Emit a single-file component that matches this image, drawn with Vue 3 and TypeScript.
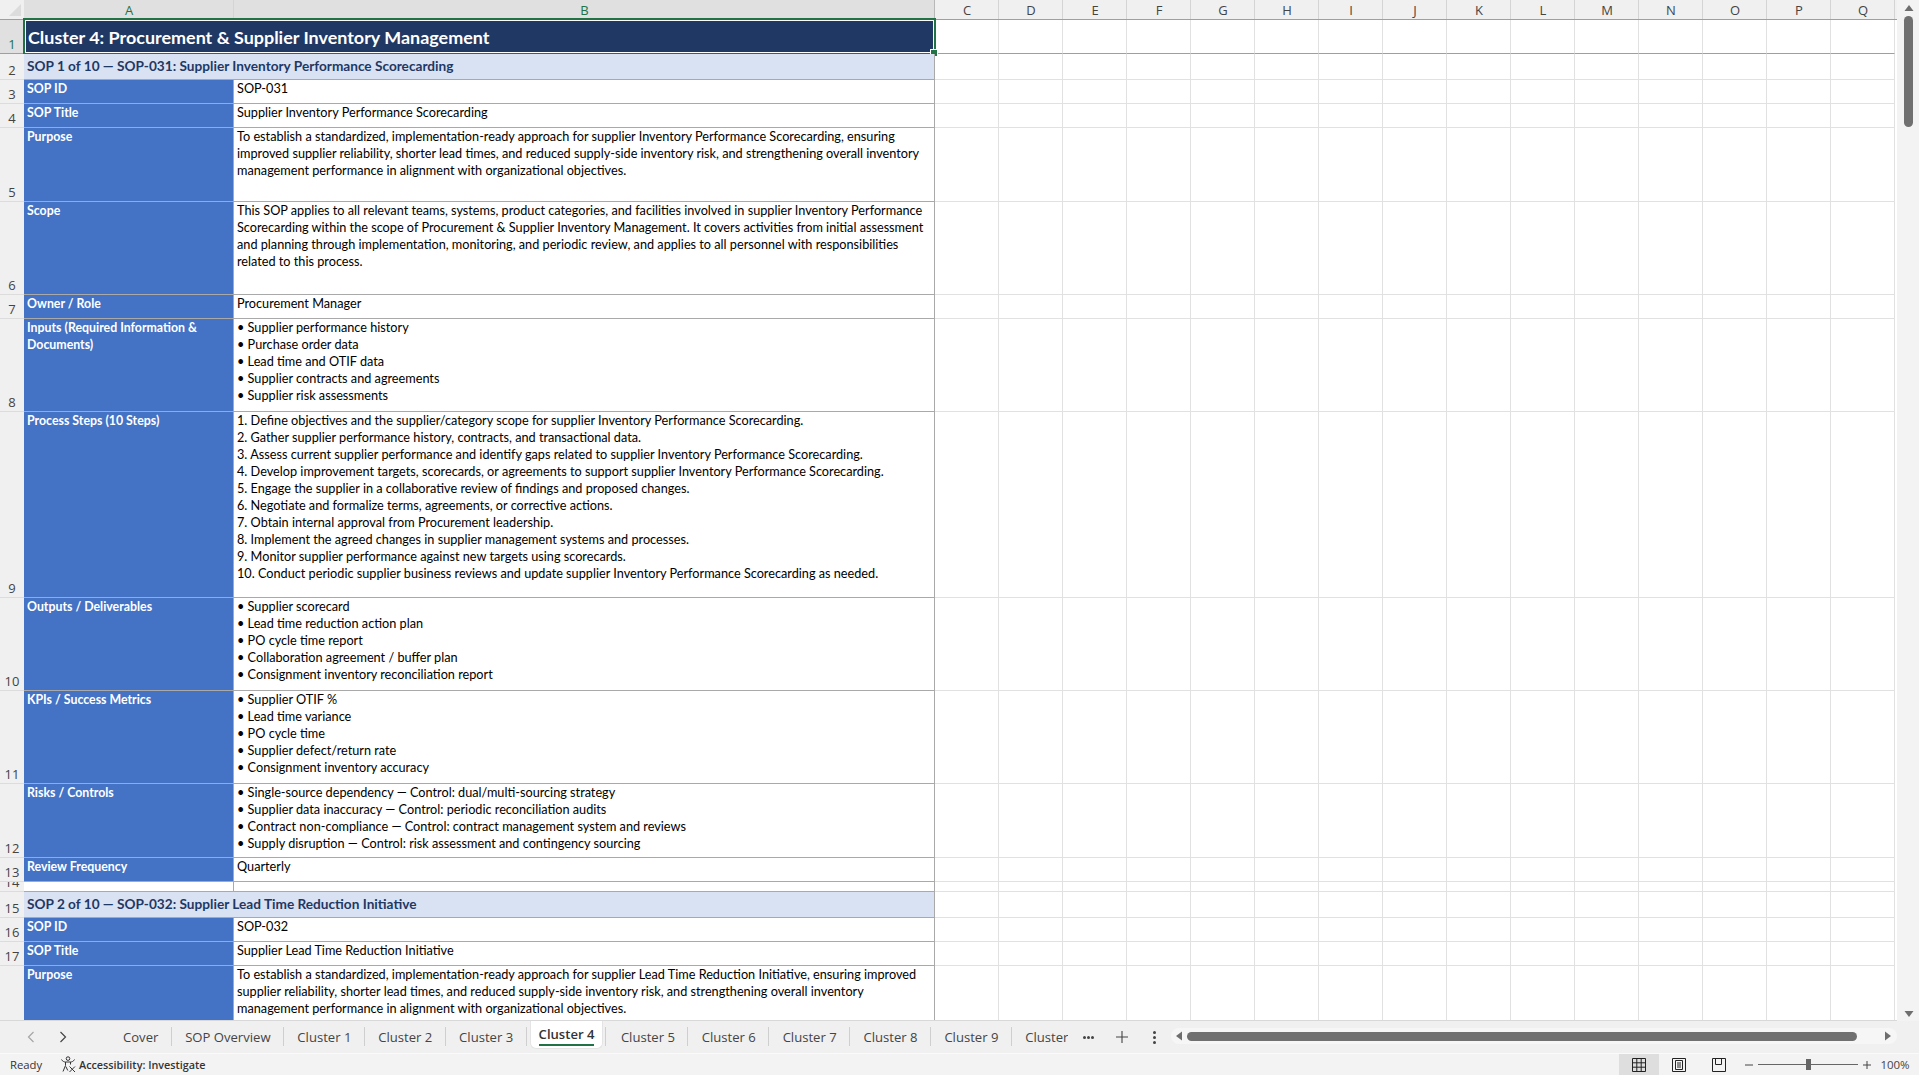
<script setup lang="ts">
type Row = {
  n: number;
  h: number;
  kind?: "title" | "section" | "blank";
  a?: string;
  b?: string;
};

const extraCols = ["C", "D", "E", "F", "G", "H", "I", "J", "K", "L", "M", "N", "O", "P", "Q"];

const rows: Row[] = [
  { n: 1, h: 34, kind: "title", a: "Cluster 4: Procurement & Supplier Inventory Management" },
  { n: 2, h: 26, kind: "section", a: "SOP 1 of 10 — SOP-031: Supplier Inventory Performance Scorecarding" },
  { n: 3, h: 24, a: "SOP ID", b: "SOP-031" },
  { n: 4, h: 24, a: "SOP Title", b: "Supplier Inventory Performance Scorecarding" },
  {
    n: 5,
    h: 74,
    a: "Purpose",
    b: "To establish a standardized, implementation-ready approach for supplier Inventory Performance Scorecarding, ensuring\nimproved supplier reliability, shorter lead times, and reduced supply-side inventory risk, and strengthening overall inventory\nmanagement performance in alignment with organizational objectives.",
  },
  {
    n: 6,
    h: 93,
    a: "Scope",
    b: "This SOP applies to all relevant teams, systems, product categories, and facilities involved in supplier Inventory Performance\nScorecarding within the scope of Procurement & Supplier Inventory Management. It covers activities from initial assessment\nand planning through implementation, monitoring, and periodic review, and applies to all personnel with responsibilities\nrelated to this process.",
  },
  { n: 7, h: 24, a: "Owner / Role", b: "Procurement Manager" },
  {
    n: 8,
    h: 93,
    a: "Inputs (Required Information &\nDocuments)",
    b: "• Supplier performance history\n• Purchase order data\n• Lead time and OTIF data\n• Supplier contracts and agreements\n• Supplier risk assessments",
  },
  {
    n: 9,
    h: 186,
    a: "Process Steps (10 Steps)",
    b: "1. Define objectives and the supplier/category scope for supplier Inventory Performance Scorecarding.\n2. Gather supplier performance history, contracts, and transactional data.\n3. Assess current supplier performance and identify gaps related to supplier Inventory Performance Scorecarding.\n4. Develop improvement targets, scorecards, or agreements to support supplier Inventory Performance Scorecarding.\n5. Engage the supplier in a collaborative review of findings and proposed changes.\n6. Negotiate and formalize terms, agreements, or corrective actions.\n7. Obtain internal approval from Procurement leadership.\n8. Implement the agreed changes in supplier management systems and processes.\n9. Monitor supplier performance against new targets using scorecards.\n10. Conduct periodic supplier business reviews and update supplier Inventory Performance Scorecarding as needed.",
  },
  {
    n: 10,
    h: 93,
    a: "Outputs / Deliverables",
    b: "• Supplier scorecard\n• Lead time reduction action plan\n• PO cycle time report\n• Collaboration agreement / buffer plan\n• Consignment inventory reconciliation report",
  },
  {
    n: 11,
    h: 93,
    a: "KPIs / Success Metrics",
    b: "• Supplier OTIF %\n• Lead time variance\n• PO cycle time\n• Supplier defect/return rate\n• Consignment inventory accuracy",
  },
  {
    n: 12,
    h: 74,
    a: "Risks / Controls",
    b: "• Single-source dependency — Control: dual/multi-sourcing strategy\n• Supplier data inaccuracy — Control: periodic reconciliation audits\n• Contract non-compliance — Control: contract management system and reviews\n• Supply disruption — Control: risk assessment and contingency sourcing",
  },
  { n: 13, h: 24, a: "Review Frequency", b: "Quarterly" },
  { n: 14, h: 10, kind: "blank" },
  { n: 15, h: 26, kind: "section", a: "SOP 2 of 10 — SOP-032: Supplier Lead Time Reduction Initiative" },
  { n: 16, h: 24, a: "SOP ID", b: "SOP-032" },
  { n: 17, h: 24, a: "SOP Title", b: "Supplier Lead Time Reduction Initiative" },
  {
    n: 18,
    h: 74,
    a: "Purpose",
    b: "To establish a standardized, implementation-ready approach for supplier Lead Time Reduction Initiative, ensuring improved\nsupplier reliability, shorter lead times, and reduced supply-side inventory risk, and strengthening overall inventory\nmanagement performance in alignment with organizational objectives.",
  },
];

const tabs = ["Cover", "SOP Overview", "Cluster 1", "Cluster 2", "Cluster 3", "Cluster 4", "Cluster 5", "Cluster 6", "Cluster 7", "Cluster 8", "Cluster 9", "Cluster 10"];
</script>

<template>
  <div class="app">
    <div class="main">
      <div class="sheet">
        <div class="col-head">
          <div class="corner"><span class="corner-tri"></span></div>
          <div class="ch ch-a on">A</div>
          <div class="ch ch-b on">B</div>
          <div v-for="c in extraCols" :key="c" class="ch ch-x">{{ c }}</div>
        </div>

        <div
          v-for="r in rows"
          :key="r.n"
          class="row"
          :class="{ frozen: r.n === 1 }"
          :style="{ height: r.h + 'px' }"
        >
          <div class="rh" :class="{ on: r.n === 1 }">{{ r.n }}</div>
          <template v-if="r.kind === 'title'">
            <div class="merged title">{{ r.a }}</div>
          </template>
          <template v-else-if="r.kind === 'section'">
            <div class="merged section">{{ r.a }}</div>
          </template>
          <template v-else>
            <div class="cell label" :class="{ empty: r.kind === 'blank' }">{{ r.a }}</div>
            <div class="cell value">{{ r.b }}</div>
          </template>
          <div v-for="c in extraCols" :key="c" class="blank"></div>
          <div v-if="r.n === 1" class="selection"><span class="handle"></span></div>
        </div>
      </div>

      <div class="vbar">
        <svg class="varrow" width="10" height="8" viewBox="0 0 10 8"><path d="M5 1 9.5 7H.5z" fill="#6e6e6e" /></svg>
        <div class="vthumb"></div>
        <div class="vspace"></div>
        <svg class="varrow" width="10" height="8" viewBox="0 0 10 8"><path d="M5 7 .5 1h9z" fill="#6e6e6e" /></svg>
      </div>
    </div>

    <div class="tabbar">
      <div class="nav">
        <svg width="8" height="12" viewBox="0 0 8 12"><path d="M6.5 1 1.5 6l5 5" fill="none" stroke="#a6a6a6" stroke-width="1.2" /></svg>
        <svg width="8" height="12" viewBox="0 0 8 12"><path d="M1.5 1l5 5-5 5" fill="none" stroke="#444" stroke-width="1.2" /></svg>
      </div>
      <div class="tabs">
        <div
          v-for="t in tabs"
          :key="t"
          class="tab"
          :class="{ active: t === 'Cluster 4' }"
        >
          <span>{{ t }}</span>
        </div>
      </div>
      <div class="more"><i></i><i></i><i></i></div>
      <svg class="plus" width="14" height="14" viewBox="0 0 14 14"><path d="M7 1v12M1 7h12" stroke="#444" stroke-width="1.1" /></svg>
      <div class="kebab"><i></i><i></i><i></i></div>
      <div class="hbar">
        <svg width="8" height="10" viewBox="0 0 8 10"><path d="M1 5 7 .5v9z" fill="#6e6e6e" /></svg>
        <div class="hthumb"></div>
        <svg width="8" height="10" viewBox="0 0 8 10"><path d="M7 5 1 .5v9z" fill="#6e6e6e" /></svg>
      </div>
    </div>

    <div class="status">
      <span class="ready">Ready</span>
      <svg class="a11y" width="16" height="17" viewBox="0 0 16 17" fill="none" stroke="#333" stroke-width="1">
        <circle cx="8" cy="2.6" r="1.8" />
        <path d="M1.5 3.5C2.5 5.5 4.5 6 5.5 6h5c1 0 3-.5 4-2.5" />
        <path d="M5.5 6v3.5L3 15.5M10.5 6v2.5M5.8 10.5l2 4" />
        <path d="M9.5 10.5l5.5 5.5M15 10.5l-5.5 5.5" />
      </svg>
      <span class="a11y-text">Accessibility: Investigate</span>
      <div class="status-right">
        <div class="view active">
          <svg width="14" height="14" viewBox="0 0 14 14" fill="none" stroke="#222"><path d="M.5.5h13v13H.5zM.5 4.8h13M.5 9.2h13M4.8.5v13M9.2.5v13" /></svg>
        </div>
        <div class="view">
          <svg width="14" height="14" viewBox="0 0 14 14" fill="none" stroke="#222"><path d="M.5.5h13v13H.5zM3.5 2.5h7v9h-7zM5 5h4M5 7h4M5 9h4" /></svg>
        </div>
        <div class="view">
          <svg width="14" height="14" viewBox="0 0 14 14" fill="none" stroke="#222"><path d="M.5.5h13v13H.5zM3.5.5V6.5h6V.5" /></svg>
        </div>
        <div class="zoom">
          <svg width="8" height="8" viewBox="0 0 8 8"><path d="M0 4h8" stroke="#444" /></svg>
          <div class="slider"><span class="knob"></span></div>
          <svg width="8" height="8" viewBox="0 0 8 8"><path d="M0 4h8M4 0v8" stroke="#444" /></svg>
        </div>
        <span class="pct">100%</span>
      </div>
    </div>
  </div>
</template>

<style scoped>
.app {
  width: 1919px;
  height: 1075px;
  display: flex;
  flex-direction: column;
  overflow: hidden;
  background: #fff;
  font-family: "Open Sans", "Noto Sans", sans-serif;
  color: #333;
}

.main {
  height: 1021px;
  display: flex;
  flex-shrink: 0;
}

.sheet {
  width: 1897px;
  height: 1021px;
  overflow: hidden;
  border-bottom: 1px solid #d8d8d8;
  box-sizing: border-box;
  flex-shrink: 0;
}

.col-head {
  display: flex;
  height: 19px;
  border-bottom: 1px solid #9f9f9f;
  background: #f0f0f0;
  box-sizing: content-box;
}

.corner {
  width: 24px;
  flex-shrink: 0;
  position: relative;
  box-sizing: border-box;
}

.corner-tri {
  position: absolute;
  right: 3px;
  bottom: 3px;
  border-style: solid;
  border-width: 0 0 12px 12px;
  border-color: transparent transparent #dcdcdc transparent;
}

.ch {
  display: flex;
  align-items: center;
  justify-content: center;
  font-size: 13px;
  color: #444;
  box-sizing: border-box;
  border-right: 1px solid #d4d4d4;
  flex-shrink: 0;
  padding-left: 1px;
}

.ch.on {
  background: #e0e0e0;
  color: #217346;
}

.ch-a {
  width: 210px;
}

.ch-b {
  width: 701px;
  border-right-color: #b8b8b8;
}

.ch-x {
  width: 64px;
}

.row {
  display: flex;
  position: relative;
  box-sizing: border-box;
}

.rh {
  width: 24px;
  flex-shrink: 0;
  display: flex;
  align-items: flex-end;
  justify-content: center;
  overflow: hidden;
  background: #f0f0f0;
  font-size: 13px;
  line-height: 18px;
  color: #444;
  box-sizing: border-box;
  border-bottom: 1px solid #dcdcdc;
}

.rh.on {
  color: #217346;
  background: #e0e0e0;
}

.merged,
.cell {
  font-family: Lato, "Liberation Sans", sans-serif;
  box-sizing: border-box;
  white-space: pre;
  overflow: hidden;
  flex-shrink: 0;
}

.merged {
  width: 911px;
  display: flex;
  align-items: center;
  border-bottom: 1px solid #a9a9a9;
  border-right: 1px solid #a9a9a9;
}

.title {
  background: #1f3864;
  color: #fff;
  font-size: 17.95px;
  font-weight: 700;
  padding-left: 4px;
}

.section {
  background: #d9e2f3;
  color: #1f3864;
  font-size: 13.65px;
  font-weight: 700;
  padding: 0 0 1px 3px;
}

.cell {
  line-height: 17px;
  border-bottom: 1px solid #a9a9a9;
  border-right: 1px solid #a9a9a9;
}

.label {
  width: 210px;
  background: #4472c4;
  color: #fff;
  font-size: 12.35px;
  font-weight: 700;
  padding-left: 3px;
}

.label.empty {
  background: #fff;
}

.value {
  width: 701px;
  background: #fff;
  color: #000;
  font-size: 12.7px;
  padding-left: 3px;
}

.blank {
  width: 64px;
  flex-shrink: 0;
  box-sizing: border-box;
  border-right: 1px solid #e1e1e1;
  border-bottom: 1px solid #e1e1e1;
}

.frozen .blank,
.frozen .rh {
  border-bottom-color: #9f9f9f;
}

.selection {
  position: absolute;
  left: 23px;
  top: -2px;
  width: 913px;
  height: 37px;
  box-sizing: border-box;
  border: 2px solid #217346;
  outline: 1px solid #fff;
  outline-offset: -3px;
  pointer-events: none;
}

.handle {
  position: absolute;
  right: -4px;
  bottom: -4px;
  width: 6px;
  height: 6px;
  background: #217346;
  border: 1px solid #fff;
}

.vbar {
  width: 22px;
  background: #f3f3f3;
  display: flex;
  flex-direction: column;
  align-items: center;
  padding: 4px 0 3px 1px;
  box-sizing: border-box;
}

.varrow {
  flex-shrink: 0;
}

.vthumb {
  width: 9px;
  height: 111px;
  margin-top: 4px;
  border-radius: 5px;
  background: #707070;
  flex-shrink: 0;
}

.vspace {
  flex: 1;
}

.tabbar {
  height: 32px;
  flex-shrink: 0;
  display: flex;
  align-items: center;
  background: #f0f0f0;
  position: relative;
}

.nav {
  width: 109.6px;
  flex-shrink: 0;
  display: flex;
  align-items: center;
  gap: 24px;
  padding-left: 27px;
  box-sizing: border-box;
}

.tabs {
  width: 958.4px;
  flex-shrink: 0;
  display: flex;
  height: 100%;
  overflow: hidden;
}

.tab {
  display: flex;
  align-items: center;
  flex-shrink: 0;
  padding: 0 13.4px;
  font-size: 13.1px;
  color: #444;
  height: 100%;
  box-sizing: border-box;
  position: relative;
}

.tab span {
  position: relative;
  white-space: nowrap;
}

.tab:not(.active)::after {
  content: "";
  position: absolute;
  right: 0;
  top: 6px;
  height: 19px;
  width: 1px;
  background: #cfcfcf;
}

.tab.active {
  background: #fff;
  height: 28px;
  padding: 0 8px;
  margin: 0 4px 0 3px;
  border-radius: 0 0 6px 6px;
  border: 1px solid #e4e4e4;
  border-top: none;
  font-weight: 600;
}

.tab.active::after {
  content: "";
  position: absolute;
  right: -4px;
  top: 6px;
  height: 19px;
  width: 1px;
  background: #cfcfcf;
}

.tab.active span {
  color: #333;
  top: 1px;
  border-bottom: 2px solid #217346;
  padding-bottom: 1px;
}

.more {
  width: 42px;
  flex-shrink: 0;
  display: flex;
  justify-content: center;
  gap: 1px;
}

.more i {
  width: 3px;
  height: 3px;
  border-radius: 50%;
  background: #444;
}

.plus {
  flex-shrink: 0;
  margin-left: 5px;
}

.kebab {
  margin-left: 24px;
  display: flex;
  flex-direction: column;
  gap: 2px;
}

.kebab i {
  width: 3px;
  height: 3px;
  border-radius: 50%;
  background: #444;
}

.hbar {
  position: absolute;
  left: 1171px;
  top: 7px;
  width: 726px;
  height: 16px;
  display: flex;
  align-items: center;
  padding: 0 5px 0 4px;
  box-sizing: border-box;
  background: #f6f6f6;
  border-radius: 8px;
}

.hthumb {
  width: 670px;
  height: 9px;
  margin: 0 auto 0 4px;
  border-radius: 5px;
  background: #707070;
}

.status {
  flex: 1;
  display: flex;
  align-items: center;
  background: #f3f3f3;
  border-top: 1px solid #fafafa;
  font-size: 11.3px;
  color: #333;
  box-sizing: border-box;
}

.ready {
  margin-left: 10px;
  width: 50px;
}

.a11y {
  flex-shrink: 0;
}

.a11y-text {
  margin-left: 3px;
  font-size: 10.8px;
  font-weight: 600;
}

.status-right {
  margin-left: auto;
  height: 100%;
  display: flex;
  align-items: center;
}

.view {
  width: 40px;
  height: 100%;
  display: flex;
  align-items: center;
  justify-content: center;
}

.view.active {
  background: #dedede;
}

.zoom {
  margin-left: 6px;
  width: 126px;
  display: flex;
  align-items: center;
  gap: 5px;
}

.slider {
  width: 100px;
  height: 1px;
  background: #666;
  position: relative;
}

.knob {
  position: absolute;
  left: 48px;
  top: -5px;
  width: 5px;
  height: 11px;
  background: #666;
}

.pct {
  width: 48px;
  text-align: center;
  color: #444;
  font-size: 11.5px;
}
</style>

<style>
html,
body {
  margin: 0;
  overflow: hidden;
}
</style>
